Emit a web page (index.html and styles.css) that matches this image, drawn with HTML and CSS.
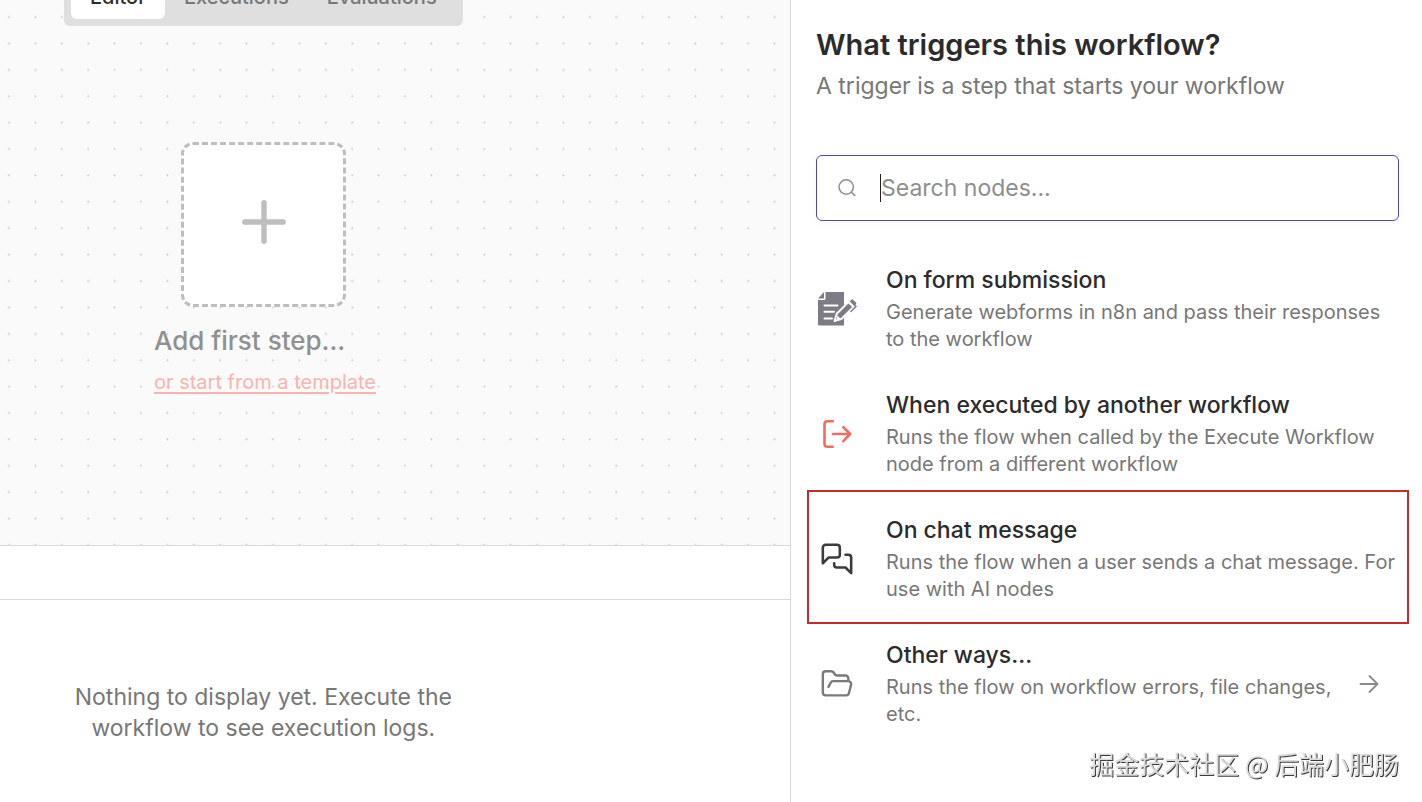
FILE: index.html
```html
<!DOCTYPE html>
<html lang="en">
<head>
    <meta charset="UTF-8">
    <meta name="viewport" content="width=device-width, initial-scale=1.0">
    <title>Workflow Editor</title>
    <link rel="stylesheet" href="styles.css">
</head>
<body>
    <div class="app">
        <!-- Editor side -->
        <main class="editor">
            <section class="canvas">
                <svg class="canvas-grid" aria-hidden="true">
                    <defs>
                        <pattern id="dots" x="-4.2" y="3.8" width="26.4" height="26.4" patternUnits="userSpaceOnUse">
                            <circle cx="13.2" cy="13.2" r="0.9" fill="#c2c2c2"/>
                        </pattern>
                    </defs>
                    <rect width="100%" height="100%" fill="url(#dots)"/>
                </svg>

                <nav class="tabs">
                    <button type="button" class="tab active">Editor</button>
                    <button type="button" class="tab">Executions</button>
                    <button type="button" class="tab">Evaluations</button>
                </nav>

                <div class="first-step">
                    <button type="button" class="add-node" aria-labelledby="addLabel">
                        <svg width="46" height="46" viewBox="0 0 46 46" fill="none" stroke="#bebebe" stroke-width="5.4" stroke-linecap="round">
                            <path d="M23 3.8v38.4M3.8 23h38.4"/>
                        </svg>
                    </button>
                    <div class="add-label" id="addLabel">Add first step...</div>
                    <a href="#" class="template-link">or start from a template</a>
                </div>
            </section>

            <!-- Logs -->
            <section class="logs">
                <div class="logs-header"></div>
                <div class="logs-body">
                    <p class="logs-empty">Nothing to display yet. Execute the workflow to see execution logs.</p>
                </div>
            </section>
        </main>

        <!-- Node creator panel -->
        <aside class="panel">
            <h1 class="panel-title">What triggers this workflow?</h1>
            <p class="panel-subtitle">A trigger is a step that starts your workflow</p>

            <label class="search">
                <svg class="search-icon" width="20" height="20" viewBox="0 0 20 20" fill="none" stroke="#8e8e8e" stroke-width="1.5" stroke-linecap="round">
                    <circle cx="9.2" cy="9" r="7.2"/>
                    <path d="M14.4 14.2l3.4 3.2"/>
                </svg>
                <span class="caret"></span>
                <input type="text" class="search-input" placeholder="Search nodes..." aria-label="Search nodes">
            </label>

            <div class="triggers">
                <button type="button" class="trigger">
                    <span class="trigger-icon">
                        <svg width="42" height="36" viewBox="0 0 42 36">
                            <path fill="#7d7b85" d="M9.5 1H28v33.500H3.500q-1.500 0-1.500-1.500V9h6q1.500 0 1.500-1.500z"/>
                            <path fill="#7d7b85" d="M8 1v6.500H2z"/>
                            <path stroke="#fff" stroke-width="2" stroke-linecap="round" d="M8.500 14.500h13M8.500 20.700h9.500M8.500 27.500h7.500"/>
                            <path fill="#7d7b85" stroke="#fff" stroke-width="2" stroke-linejoin="round" d="M18.500 30l2.200-7.200L32.500 11l5 5-11.800 11.700z"/>
                            <path fill="#7d7b85" d="M33.600 10.300l1.800-1.600q.8-.7 1.600 0l3 2.900q.8.8 0 1.600l-1.600 1.800z"/>
                            <path fill="none" stroke="#7d7b85" stroke-width="1.500" stroke-linecap="round" d="M38.900 14.500l1 1-5 5"/>
                            <path fill="#fff" d="M21.300 24.400l3.200 3-3.700 1z"/>
                        </svg>
                    </span>
                    <span class="trigger-text">
                        <span class="trigger-name">On form submission</span>
                        <span class="trigger-desc">Generate webforms in n8n and pass their responses to the workflow</span>
                    </span>
                </button>

                <button type="button" class="trigger">
                    <span class="trigger-icon">
                        <svg width="32" height="32" viewBox="0 0 32 32" fill="none" stroke="#ee6f5f" stroke-width="2.600" stroke-linecap="round" stroke-linejoin="round">
                            <path d="M11.800 3.200H6.500q-3 0-3 3v19.600q0 3 3 3h5.300M12 16h17M22.300 9.200l6.900 6.800-6.900 7.200"/>
                        </svg>
                    </span>
                    <span class="trigger-text">
                        <span class="trigger-name">When executed by another workflow</span>
                        <span class="trigger-desc">Runs the flow when called by the Execute Workflow node from a different workflow</span>
                    </span>
                </button>

                <button type="button" class="trigger highlighted">
                    <span class="trigger-icon">
                        <svg width="34" height="34" viewBox="0 0 24 24" fill="none" stroke="#3b3b3b" stroke-width="1.800" stroke-linecap="round" stroke-linejoin="round">
                            <path d="M14 9a2 2 0 0 1-2 2H6l-4 4V4a2 2 0 0 1 2-2h8a2 2 0 0 1 2 2z"/>
                            <path d="M18 9h2a2 2 0 0 1 2 2v11l-4-4h-6a2 2 0 0 1-2-2v-1"/>
                        </svg>
                    </span>
                    <span class="trigger-text">
                        <span class="trigger-name">On chat message</span>
                        <span class="trigger-desc">Runs the flow when a user sends a chat message. For use with AI nodes</span>
                    </span>
                </button>

                <button type="button" class="trigger">
                    <span class="trigger-icon">
                        <svg width="34" height="34" viewBox="0 0 24 24" fill="none" stroke="#7a7a7a" stroke-width="1.700" stroke-linecap="round" stroke-linejoin="round">
                            <path d="m6 14 1.500-2.900A2 2 0 0 1 9.240 10H20a2 2 0 0 1 1.940 2.500l-1.540 6a2 2 0 0 1-1.950 1.500H4a2 2 0 0 1-2-2V5a2 2 0 0 1 2-2h3.900a2 2 0 0 1 1.690.9l.81 1.200a2 2 0 0 0 1.670.9H18a2 2 0 0 1 2 2v2"/>
                        </svg>
                    </span>
                    <span class="trigger-text">
                        <span class="trigger-name">Other ways...</span>
                        <span class="trigger-desc">Runs the flow on workflow errors, file changes, etc.</span>
                    </span>
                    <svg class="trigger-arrow" width="20" height="20" viewBox="0 0 20 20" fill="none" stroke="#8c8c8c" stroke-width="1.800" stroke-linecap="round" stroke-linejoin="round">
                        <path d="M1.500 10h17M10.500 2l8 8-8 8"/>
                    </svg>
                </button>
            </div>
        </aside>
    </div>

    <div class="watermark" lang="zh">掘金技术社区 @ 后端小肥肠</div>
</body>
</html>
```

FILE: styles.css
```css
/* General */
* {
    box-sizing: border-box;
}

body {
    margin: 0;
    font-family: Inter, "Noto Sans CJK SC", sans-serif;
    font-size: 20px;
    color: #2b2b2b;
    background-color: #ffffff;
}

button {
    font-family: inherit;
    border: none;
    cursor: pointer;
}

.app {
    display: grid;
    grid-template-columns: 5fr 4fr;
    height: 100vh;
    overflow: hidden;
}

/* Editor */
.editor {
    display: flex;
    flex-direction: column;
    min-width: 0;
}

.canvas {
    position: relative;
    flex: 1;
    overflow: hidden;
    background-color: #fafafa;
}

.canvas-grid {
    position: absolute;
    inset: 0;
    width: 100%;
    height: 100%;
}

/* Tabs */
.tabs {
    position: relative;
    display: flex;
    width: fit-content;
    margin: -32px 0 0 64px;
    padding: 7px;
    background-color: #dfdfdf;
    border-radius: 6px;
}

.tab {
    height: 44px;
    padding: 0 19px;
    font-size: 20px;
    font-weight: 500;
    color: #777777;
    background-color: transparent;
    border-radius: 6px;
}

.tab.active {
    color: #2b2b2b;
    background-color: #ffffff;
}

/* First step */
.first-step {
    position: relative;
    display: flex;
    flex-direction: column;
    align-items: flex-start;
    width: 219px;
    margin: 116px 0 0 154px;
}

.add-node {
    display: flex;
    align-items: center;
    justify-content: center;
    align-self: center;
    width: 165px;
    height: 165px;
    padding: 0 0 5px;
    background-color: #ffffff;
    border: 3px dashed #bebebe;
    border-radius: 12px;
}

.add-label {
    margin-top: 16px;
    font-size: 26px;
    line-height: 36px;
    font-weight: 500;
    color: #909090;
    white-space: nowrap;
}

.template-link {
    margin-top: 10px;
    font-size: 20px;
    line-height: 27px;
    color: #f8b4ae;
    text-underline-offset: 3px;
    text-decoration-thickness: 2px;
    white-space: nowrap;
}

/* Logs */
.logs-header {
    height: 55px;
    border-top: 1px solid #dbdbdb;
    border-bottom: 1px solid #dbdbdb;
}

.logs-body {
    display: grid;
    grid-template-columns: 2fr 1fr;
    justify-items: center;
    padding: 82px 0 58px;
}

.logs-empty {
    max-width: 400px;
    margin: 0;
    font-size: 23px;
    line-height: 31px;
    text-align: center;
    color: #777777;
}

/* Panel */
.panel {
    min-width: 0;
    padding: 26px 23px 0 25px;
    border-left: 1px solid #dbdbdb;
}

.panel-title {
    margin: 0;
    font-size: 29px;
    line-height: 38px;
    font-weight: 600;
}

.panel-subtitle {
    margin: 7px 0 0;
    font-size: 23px;
    line-height: 31px;
    color: #777777;
}

.search {
    display: flex;
    align-items: center;
    height: 66px;
    margin-top: 53px;
    padding: 0 20px;
    border: 1px solid #5147a1;
    border-radius: 6px;
    box-shadow: 0 2px 12px rgba(0, 0, 0, 0.03);
}

.search-icon {
    margin-right: 23px;
}

.caret {
    width: 1px;
    height: 28px;
    background-color: #222222;
}

.search-input {
    flex: 1;
    min-width: 0;
    padding: 0;
    font-family: inherit;
    font-size: 23px;
    line-height: 31px;
    color: #2b2b2b;
    background-color: transparent;
    border: none;
    outline: none;
}

.search-input::placeholder {
    color: #8e8e8e;
}

/* Trigger list */
.triggers {
    margin-top: 26px;
}

.trigger {
    position: relative;
    display: flex;
    align-items: center;
    width: 100%;
    padding: 18px 0 19px;
    text-align: left;
    background-color: transparent;
}

.trigger-icon {
    display: flex;
    align-items: center;
    justify-content: center;
    flex: none;
    width: 42px;
    margin-right: 28px;
}

.trigger-text {
    flex: 1;
}

.trigger-name,
.trigger-desc {
    display: block;
}

.trigger-name {
    font-size: 23px;
    line-height: 31px;
    font-weight: 500;
    color: #2b2b2b;
}

.trigger-desc {
    margin-top: 3px;
    font-size: 20px;
    line-height: 27px;
    color: #777777;
}

.trigger-arrow {
    flex: none;
    margin: 0 20px 0 12px;
}

/* Red frame around the highlighted trigger */
.trigger.highlighted::after {
    content: "";
    position: absolute;
    inset: -7px -10px -2px -9px;
    border: 2px solid #c9282d;
}

/* Watermark */
.watermark {
    position: fixed;
    right: 23px;
    bottom: 21px;
    font-family: "Noto Sans CJK SC", sans-serif;
    font-size: 25px;
    line-height: 36px;
    color: #dcdcdc;
    text-shadow: 1px 1px 0 #3a3a3a;
}
```
